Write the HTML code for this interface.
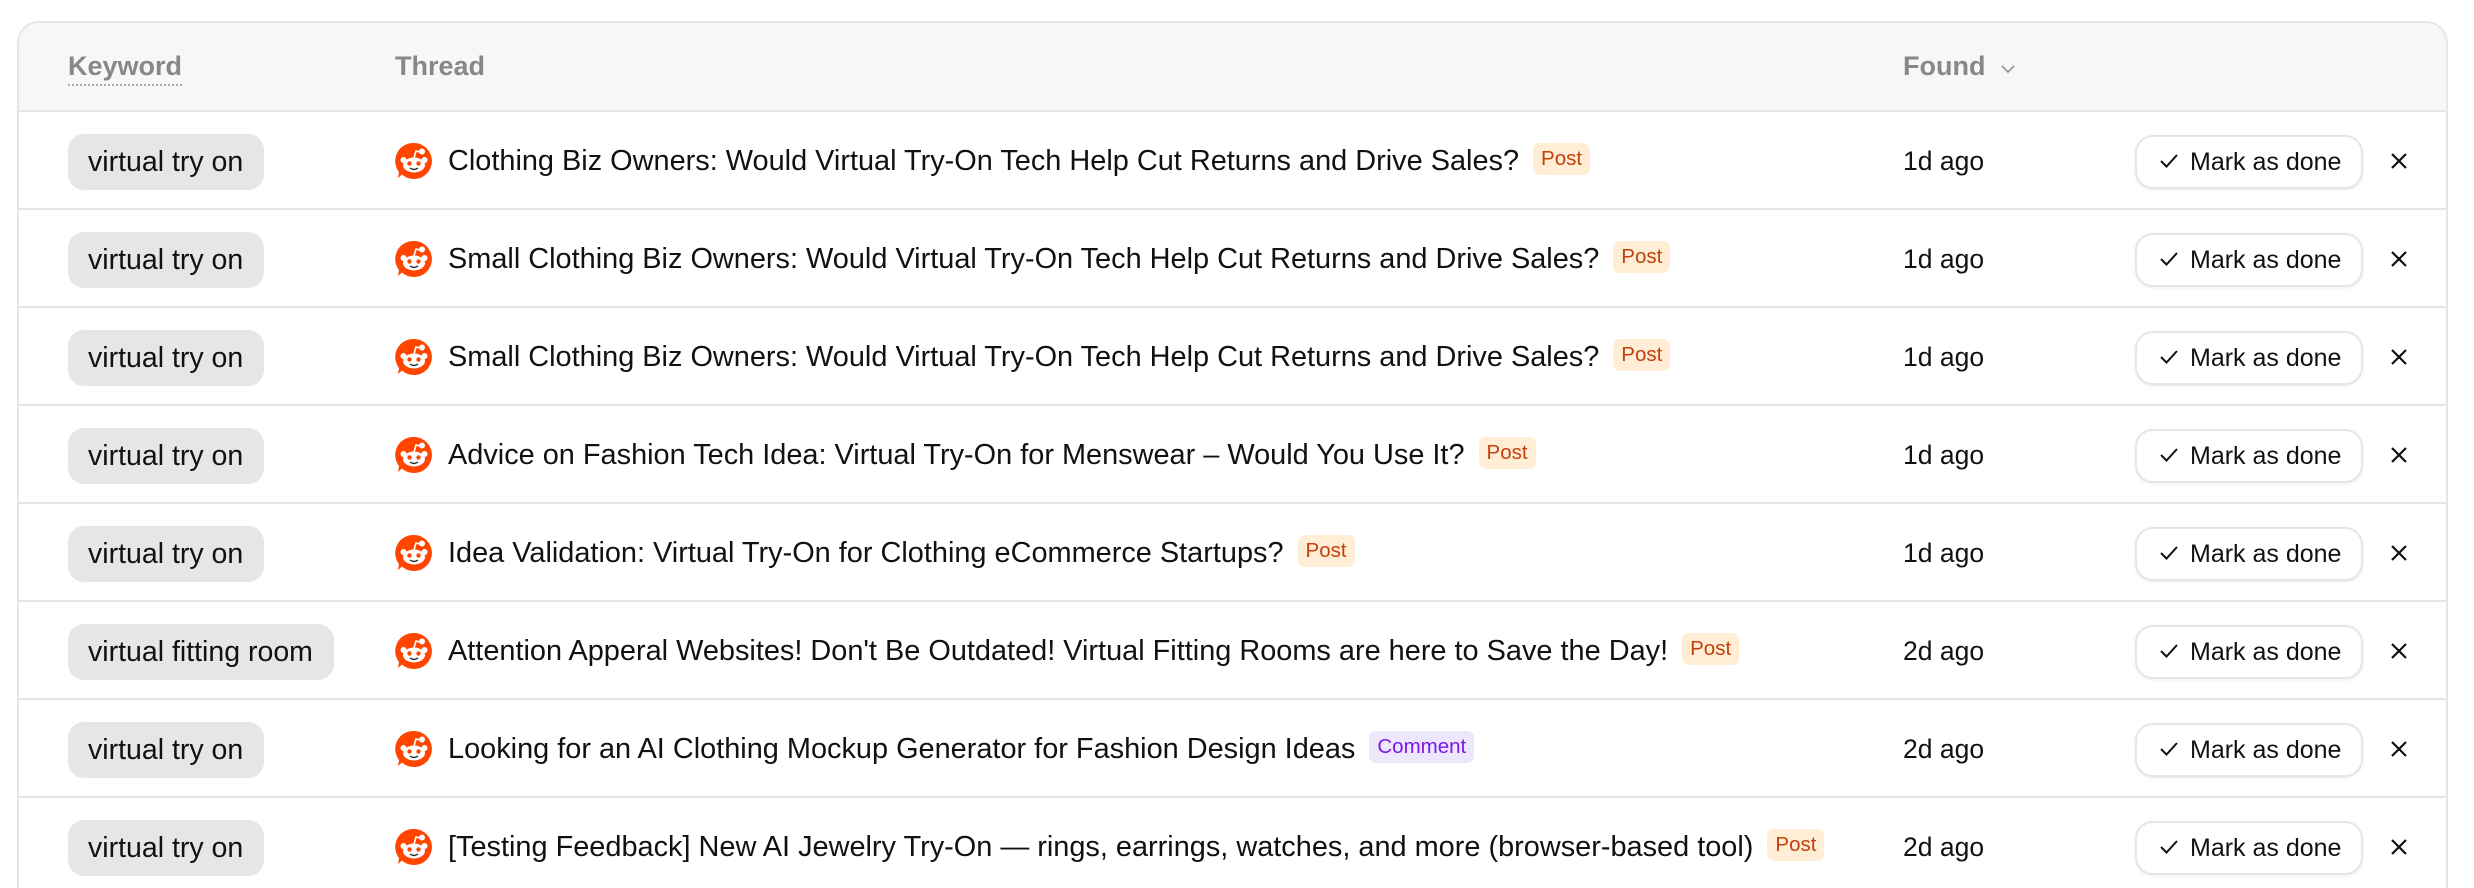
<!DOCTYPE html>
<html style="width:2474px;height:888px;overflow:hidden"><head><meta charset="utf-8">
<style>
*{box-sizing:border-box;margin:0;padding:0}
body{width:2474px;height:888px;background:#fff;font-family:"Liberation Sans",sans-serif;overflow:hidden;position:relative;color:#111}
.tbl{position:absolute;left:17px;top:21px;width:2431px;height:880px;border:2px solid #e6e6e6;border-bottom:none;border-radius:22px 22px 0 0;overflow:hidden}
.hdr{position:absolute;left:0;top:0;width:100%;height:89px;background:#f7f7f7;border-bottom:2px solid #e6e6e6;color:#888;font-size:27px;font-weight:bold}
.hdr span{position:absolute;top:28px}
.row{position:absolute;left:0;width:100%;height:98px;border-bottom:2px solid #e6e6e6}
.pill{position:absolute;left:49px;top:22px;height:56px;line-height:56px;padding:0 21px 0 20px;background:#e6e6e6;border-radius:16px;font-size:28.5px}
.ic{position:absolute;left:376px;top:30px;width:38px;height:38px}
.tt{position:absolute;left:429px;top:0;line-height:98px;font-size:28.9px;white-space:nowrap}
.bd{display:inline-block;vertical-align:middle;height:32px;line-height:32px;padding:0 8px;border-radius:7px;font-size:20.5px;margin-left:14px;position:relative;top:-3px}
.post{background:#ffedd5;color:#c2410c}
.com{background:#ede7fe;color:#7a18e6}
.fd{position:absolute;left:1884px;top:0;line-height:98px;font-size:26.5px}
.btn{position:absolute;left:2116px;top:23px;width:228px;height:54px;border:2px solid #e6e6e6;border-radius:18px;background:#fff;box-shadow:0 1px 3px rgba(0,0,0,.08);font-size:25px;line-height:50px;padding-left:53px;white-space:nowrap}
.btn svg{position:absolute;left:22px;top:16px}
.x{position:absolute;left:2371px;top:40px}
</style></head><body>
<div class="tbl">
<div class="hdr">
<span style="left:49px;border-bottom:2px dotted #aaa;padding-bottom:2px">Keyword</span>
<span style="left:376px">Thread</span>
<span style="left:1884px">Found <svg width="18" height="12" viewBox="0 0 18 12" style="margin-left:6px"><path d="M3 3l6 6 6-6" fill="none" stroke="#999" stroke-width="1.8"/></svg></span>
</div>
<div id="rows"></div>
</div>
<script>
var d=[
["virtual try on","Clothing Biz Owners: Would Virtual Try-On Tech Help Cut Returns and Drive Sales?","Post","1d ago"],
["virtual try on","Small Clothing Biz Owners: Would Virtual Try-On Tech Help Cut Returns and Drive Sales?","Post","1d ago"],
["virtual try on","Small Clothing Biz Owners: Would Virtual Try-On Tech Help Cut Returns and Drive Sales?","Post","1d ago"],
["virtual try on","Advice on Fashion Tech Idea: Virtual Try-On for Menswear \u2013 Would You Use It?","Post","1d ago"],
["virtual try on","Idea Validation: Virtual Try-On for Clothing eCommerce Startups?","Post","1d ago"],
["virtual fitting room","Attention Apperal Websites! Don't Be Outdated! Virtual Fitting Rooms are here to Save the Day!","Post","2d ago"],
["virtual try on","Looking for an AI Clothing Mockup Generator for Fashion Design Ideas","Comment","2d ago"],
["virtual try on","[Testing Feedback] New AI Jewelry Try-On \u2014 rings, earrings, watches, and more (browser-based tool)","Post","2d ago"]];
var ic='<svg class="ic" viewBox="0 0 38 38"><path d="M19 1a18 18 0 1 1-12 31.5L3 36l1-6A18 18 0 0 1 19 1z" fill="#ff4500"/><ellipse cx="19" cy="23" rx="11" ry="7.5" fill="#fff"/><circle cx="8.5" cy="18" r="3" fill="#fff"/><circle cx="29.5" cy="18" r="3" fill="#fff"/><path d="M19 16l2-7 6 1.5" fill="none" stroke="#fff" stroke-width="1.6"/><circle cx="27" cy="9.5" r="3" fill="#fff"/><circle cx="14.5" cy="21.5" r="2.2" fill="#ff4500"/><circle cx="23.5" cy="21.5" r="2.2" fill="#ff4500"/><path d="M15 26q4 3 8 0" fill="none" stroke="#222" stroke-width="1.4"/></svg>';
var h='';
d.forEach(function(r,i){
h+='<div class="row" style="top:'+(89+i*98)+'px"><div class="pill">'+r[0]+'</div>'+ic+
'<div class="tt">'+r[1]+'<span class="bd '+(r[2]=='Post'?'post':'com')+'">'+r[2]+'</span></div>'+
'<div class="fd">'+r[3]+'</div>'+
'<div class="btn"><svg width="20" height="16" viewBox="0 0 20 16"><path d="M2 8l5.5 5.5L18 2" fill="none" stroke="#111" stroke-width="2"/></svg>Mark as done</div>'+
'<svg class="x" width="18" height="18" viewBox="0 0 18 18"><path d="M2 2l14 14M16 2L2 16" stroke="#111" stroke-width="2.2"/></svg></div>';
});
document.getElementById('rows').innerHTML=h;
</script>
</body></html>
